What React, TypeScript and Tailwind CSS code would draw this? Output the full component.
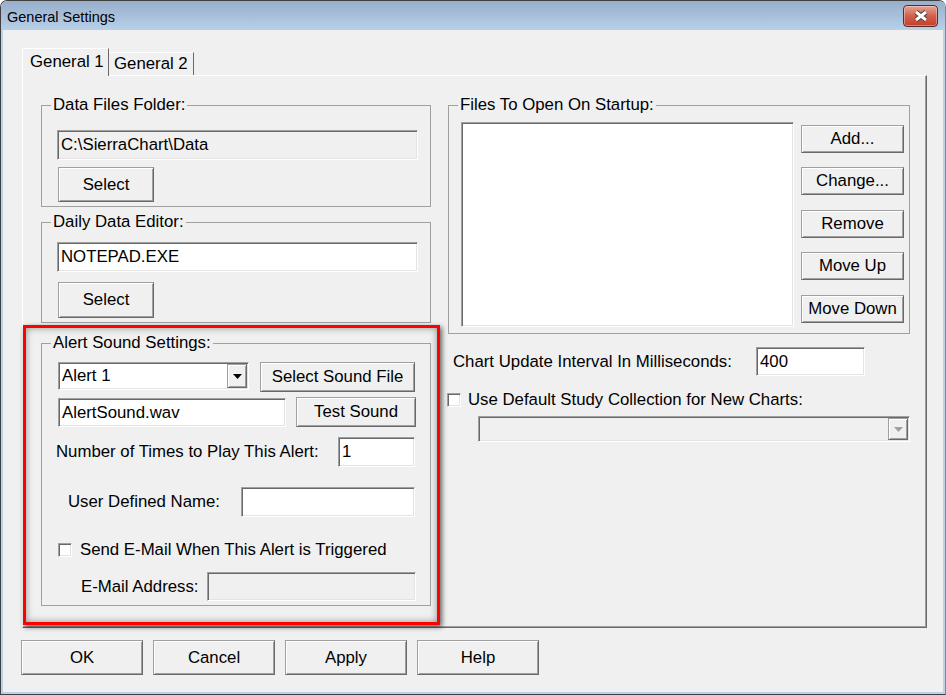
import React from "react";

const sunken =
  "border border-[#a0a0a0] border-r-white border-b-white shadow-[inset_1px_1px_0_#696969,inset_-1px_-1px_0_#e3e3e3]";
const raised =
  "border border-[#a0a0a0] border-r-[#696969] border-b-[#696969] shadow-[inset_1px_1px_0_#ffffff,inset_-1px_-1px_0_#a0a0a0] bg-[#f0f0f0]";

function Btn({ className = "", children }: { className?: string; children?: React.ReactNode }) {
  return (
    <div className={`${raised} flex items-center justify-center shrink-0 ${className}`}>{children}</div>
  );
}

function Input({
  className = "",
  value = "",
  disabled = false,
}: {
  className?: string;
  value?: string;
  disabled?: boolean;
}) {
  return (
    <div
      className={`${sunken} flex items-center pl-[3px] shrink-0 whitespace-nowrap ${
        disabled ? "bg-[#f0f0f0]" : "bg-white"
      } ${className}`}
    >
      {value}
    </div>
  );
}

function Arrow({ color }: { color: string }) {
  return (
    <svg width="9" height="5" viewBox="0 0 9 5">
      <path d="M0 0 H9 L4.5 5 Z" fill={color} />
    </svg>
  );
}

function Check() {
  return <div className={`${sunken} w-[14px] h-[14px] bg-white shrink-0`} />;
}

function Group({
  legend,
  className = "",
  children,
}: {
  legend: string;
  className?: string;
  children?: React.ReactNode;
}) {
  return (
    <fieldset className={`border border-[#a0a0a0] min-w-0 ${className}`}>
      <legend className="ml-[9px] px-[2px] leading-[20px]">{legend}</legend>
      {children}
    </fieldset>
  );
}

export default function App() {
  return (
    <div className="w-[946px] h-[695px] bg-white font-['Liberation_Sans',Arial,sans-serif] text-[16.8px] text-black">
      <div className="w-[946px] h-[695px] flex flex-col rounded-t-[7px] border border-[#404040] border-r-[#2aa6de] overflow-hidden">
        {/* Title bar */}
        <div className="h-[29px] shrink-0 flex items-start bg-gradient-to-b from-[#98afcc] to-[#b9d0e9]">
          <div className="ml-[6px] mt-[7px] text-[14.5px] leading-[18px]">General Settings</div>
          <div className="ml-auto mr-[7px] mt-[4px] w-[35px] h-[22px] rounded-[4px] border border-[#5c2a22] bg-gradient-to-b from-[#e6a292] via-[#d2604d] to-[#c33d2b] shadow-[inset_0_0_0_1px_rgba(255,255,255,0.35)] flex items-center justify-center">
            <svg width="18" height="14" viewBox="0 0 18 14">
              <path d="M4 3 L14 11 M14 3 L4 11" stroke="#4a3a38" strokeWidth="5" />
              <path d="M4 3 L14 11 M14 3 L4 11" stroke="#ffffff" strokeWidth="3" />
            </svg>
          </div>
        </div>

        {/* Client */}
        <div className="flex-1 border-x-2 border-b-2 border-[#b9d1ea] bg-[#f0f0f0] flex flex-col">
          {/* Tabs */}
          <div className="ml-[19px] mt-[18px] h-[27px] flex items-end relative z-10 shrink-0">
            <div className="h-[28px] mb-[-1px] w-[87px] bg-[#f0f0f0] border-l border-t border-r border-white border-r-[#696969] pl-[7px] leading-[26px]">
              General 1
            </div>
            <div className="h-[23px] w-[85px] bg-[#f0f0f0] border-t border-r border-white border-r-[#696969] pl-[5px] leading-[21px]">
              General 2
            </div>
          </div>

          {/* Panel */}
          <div className="ml-[19px] w-[905px] h-[553px] shrink-0 border border-white border-r-[#696969] border-b-[#696969] shadow-[inset_-1px_-1px_0_#a0a0a0] flex gap-[17px] pl-[18px] pt-[19px]">
            {/* Left column */}
            <div className="w-[390px] flex flex-col">
              <Group legend="Data Files Folder:" className="w-[390px]">
                <div className="pl-[15px] pt-[15px] pb-[4px]">
                  <Input className="w-[361px] h-[30px]" value="C:\SierraChart\Data" disabled />
                  <Btn className="ml-[1px] mt-[7px] w-[96px] h-[35px]">Select</Btn>
                </div>
              </Group>

              <Group legend="Daily Data Editor:" className="w-[390px] mt-[5px]">
                <div className="pl-[15px] pt-[10px] pb-[4px]">
                  <Input className="w-[361px] h-[30px]" value="NOTEPAD.EXE" />
                  <Btn className="ml-[1px] mt-[10px] w-[96px] h-[36px]">Select</Btn>
                </div>
              </Group>

              {/* Highlight box */}
              <div className="ml-[-18px] mt-[2px] w-[417px] border-[3px] border-[#ff0000] pl-[15px] pt-[5px] pb-[16px] shadow-[2px_2px_5px_rgba(0,0,0,0.6),inset_0_0_7px_rgba(0,0,0,0.4)]">
                <Group legend="Alert Sound Settings:" className="w-[390px]">
                  <div className="pl-[16px] pr-[15px] pt-[9px] pb-[4px]">
                    <div className="flex items-start h-[30px]">
                      <div className={`${sunken} bg-white w-[192px] h-[28px] flex items-center pl-[3px]`}>
                        <span>Alert 1</span>
                        <div className={`${raised} ml-auto mr-[1px] w-[20px] h-[24px] flex items-center justify-center`}>
                          <Arrow color="#000000" />
                        </div>
                      </div>
                      <Btn className="ml-[11px] w-[155px] h-[30px]">Select Sound File</Btn>
                    </div>
                    <div className="mt-[5px] flex items-start h-[30px]">
                      <Input className="mt-[1px] w-[228px] h-[29px]" value="AlertSound.wav" />
                      <Btn className="ml-[10px] w-[120px] h-[30px] border-[#696969] shadow-[inset_1px_1px_0_#ffffff,inset_-1px_-1px_0_#696969]">
                        Test Sound
                      </Btn>
                    </div>
                    <div className="mt-[10px] flex items-center h-[30px]">
                      <span className="ml-[-2px]">Number of Times to Play This Alert:</span>
                      <Input className="ml-auto w-[77px] h-[30px]" value="1" />
                    </div>
                    <div className="mt-[20px] flex items-center h-[30px]">
                      <span className="ml-[10px]">User Defined Name:</span>
                      <Input className="ml-auto w-[174px] h-[30px]" />
                    </div>
                    <div className="mt-[23px] flex items-center h-[20px]">
                      <Check />
                      <span className="ml-[8px]">Send E-Mail When This Alert is Triggered</span>
                    </div>
                    <div className="mt-[12px] flex items-center h-[29px] mr-[-1px]">
                      <span className="ml-[23px]">E-Mail Address:</span>
                      <Input className="ml-auto w-[209px] h-[29px]" disabled />
                    </div>
                  </div>
                </Group>
              </div>
            </div>

            {/* Right column */}
            <div className="w-[462px] flex flex-col">
              <Group legend="Files To Open On Startup:" className="w-[462px]">
                <div className="flex pl-[12px] pt-[7px] pb-[6px]">
                  <div className={`${sunken} bg-white w-[333px] h-[205px]`} />
                  <div className="ml-[7px] mt-[3px] flex flex-col w-[103px]">
                    <Btn className="w-[103px] h-[28px]">Add...</Btn>
                    <Btn className="mt-[14px] w-[103px] h-[28px]">Change...</Btn>
                    <Btn className="mt-[15px] w-[103px] h-[28px]">Remove</Btn>
                    <Btn className="mt-[14px] w-[103px] h-[28px]">Move Up</Btn>
                    <Btn className="mt-[15px] w-[103px] h-[28px]">Move Down</Btn>
                  </div>
                </div>
              </Group>

              <div className="mt-[13px] flex items-center h-[29px]">
                <span className="ml-[5px] w-[303px] shrink-0">Chart Update Interval In Milliseconds:</span>
                <Input className="w-[109px] h-[29px]" value="400" />
              </div>

              <div className="mt-[14px] ml-[-1px] flex items-center h-[20px]">
                <Check />
                <span className="ml-[7px]">Use Default Study Collection for New Charts:</span>
              </div>

              <div className={`${sunken} mt-[6px] ml-[30px] w-[432px] h-[26px] bg-[#f0f0f0] flex items-center`}>
                <div className={`${raised} ml-auto mr-[1px] w-[20px] h-[22px] flex items-center justify-center`}>
                  <Arrow color="#a0a0a0" />
                </div>
              </div>
            </div>
          </div>

          {/* Bottom buttons */}
          <div className="ml-[18px] mt-[12px] flex gap-[10px]">
            <Btn className="w-[122px] h-[35px]">OK</Btn>
            <Btn className="w-[122px] h-[35px]">Cancel</Btn>
            <Btn className="w-[122px] h-[35px]">Apply</Btn>
            <Btn className="w-[122px] h-[35px]">Help</Btn>
          </div>
        </div>
      </div>
    </div>
  );
}
